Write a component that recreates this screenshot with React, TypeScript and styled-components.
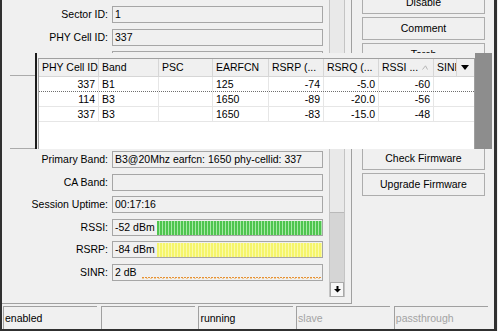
import styled, { createGlobalStyle } from "styled-components";

const GlobalStyle = createGlobalStyle`
  html, body {
    margin: 0;
    padding: 0;
    background: #f0f0f0;
    overflow: hidden;
  }
  body {
    font-family: "Liberation Sans", Arial, sans-serif;
    font-size: 10.5px;
    line-height: 13px;
    color: #000;
  }
`;

/* window frame, left / right / bottom edges are visible */
const Window = styled.div`
  position: relative;
  box-sizing: border-box;
  width: 497px;
  height: 331px;
  border-left: 2px solid #303030;
  border-right: 3px solid #303030;
  border-bottom: 2px solid #303030;
  display: flex;
  flex-direction: column;
  overflow: hidden;
`;

const Main = styled.div`
  display: flex;
  height: 304px;
  flex: none;
`;

const FormPanel = styled.div`
  box-sizing: border-box;
  width: 350px;
  height: 304px;
  border-right: 1px solid #a0a0a0;
  border-bottom: 1px solid #a0a0a0;
  padding-right: 6px;
  display: flex;
  overflow: hidden;
`;

const FormBody = styled.div`
  flex: 1;
  padding: 6px 6px 0 0;
  display: flex;
  flex-direction: column;
`;

const Row = styled.div`
  display: grid;
  grid-template-columns: 106px 211px;
  column-gap: 4px;
  height: 17px;
  flex: none;
  & + & {
    margin-top: 5.5px;
  }
`;

const Label = styled.div`
  text-align: right;
  align-self: center;
  white-space: nowrap;
`;

const Field = styled.div`
  box-sizing: border-box;
  height: 17px;
  border: 1px solid #a6a6a6;
  padding-left: 2px;
  display: flex;
  align-items: center;
  white-space: nowrap;
  overflow: hidden;
`;

const Separator = styled.div`
  flex: none;
  height: 0;
  border-top: 1px solid #ababab;
  margin: 7px 1px 2.5px 8px;
`;

const ValueText = styled.span<{ $w: number }>`
  flex: none;
  width: ${(p) => p.$w}px;
`;

const meterFill = {
  green: "repeating-linear-gradient(90deg, #4fc54f 0 2px, #a6e9a6 2px 3px)",
  yellow: "repeating-linear-gradient(90deg, #f5f56b 0 2px, #fafaa8 2px 3px)",
};

const Meter = styled.div<{ $kind: "green" | "yellow" }>`
  flex: 1;
  align-self: stretch;
  margin-top: 1px;
  background: ${(p) => meterFill[p.$kind]};
`;

/* SINR is drawn as a thin dashed trace near the bottom of the box */
const Trace = styled.div`
  flex: 1;
  align-self: stretch;
  display: flex;
  flex-direction: column;
  justify-content: flex-end;
  padding-bottom: 1px;
`;

const TraceLine = styled.div`
  flex: none;
  height: 2px;
  background:
    repeating-linear-gradient(90deg, #e59237 0 2px, transparent 2px 3px) top / 100% 1px no-repeat,
    repeating-linear-gradient(90deg, #f2c890 0 2px, transparent 2px 4px) bottom / 100% 1px no-repeat;
`;

const Scrollbar = styled.div`
  box-sizing: border-box;
  width: 16px;
  height: 297px;
  flex: none;
  display: flex;
  flex-direction: column;
  border-left: 1px solid #c4c4c4;
  border-right: 1px solid #c4c4c4;
`;

const Track = styled.div`
  flex: 1;
  background: #e9e9e9;
`;

const Thumb = styled.div`
  box-sizing: border-box;
  height: 70px;
  background: #d5d5d5;
  border-top: 1px solid #b9b9b9;
`;

const ArrowButton = styled.div`
  box-sizing: border-box;
  height: 15px;
  background: #f7f7f7;
  border: 1px solid #a9a9a9;
  display: flex;
  align-items: center;
  justify-content: center;
`;

const ButtonColumn = styled.div`
  margin: -9px 0 0 10px;
  width: 123px;
  display: flex;
  flex-direction: column;
  gap: 3px;
`;

const Button = styled.div`
  box-sizing: border-box;
  height: 23px;
  border: 1px solid #adadad;
  background: #f0f0f0;
  display: flex;
  align-items: center;
  justify-content: center;
  white-space: nowrap;
`;

const StatusBar = styled.div`
  margin-top: 2px;
  height: 23px;
  display: flex;
  gap: 3.5px;
  padding: 0 6px 0 1px;
`;

const StatusCell = styled.div<{ $off?: boolean }>`
  flex: 1;
  border-top: 1px solid #a0a0a0;
  border-left: 1px solid #a0a0a0;
  padding-left: 1px;
  display: flex;
  align-items: center;
  color: ${(p) => (p.$off ? "#a3a3a3" : "#000")};
`;

/* floating cell list laid over the form */
const Popup = styled.div`
  position: absolute;
  left: 33px;
  top: 53px;
  width: 457px;
  height: 96px;
  box-sizing: border-box;
  border-left: 2px solid #1c1c1c;
  background: #f0f0f0;
  display: flex;
`;

const ListArea = styled.div`
  padding: 5px 0 0 1px;
  display: flex;
`;

const Table = styled.div`
  box-sizing: border-box;
  width: 437px;
  border-left: 1px solid #a0a0a0;
  border-top: 1px solid #a0a0a0;
  border-right: 1px solid #a0a0a0;
  background: #fff;
`;

const cols = "60px 60px 54px 56px 55px 55px 55px 23px 15px";

const Header = styled.div`
  display: grid;
  grid-template-columns: ${cols};
  height: 18px;
  background: #f0f0f0;
  border-bottom: 1px solid #d6d6d6;
  box-sizing: border-box;
`;

const HeadCell = styled.div`
  box-sizing: border-box;
  border-right: 1px solid #d6d6d6;
  padding: 0 3px;
  display: flex;
  align-items: center;
  white-space: nowrap;
  overflow: hidden;
`;

const DropCell = styled.div`
  display: flex;
  align-items: center;
  justify-content: center;
`;

const DataRow = styled.div<{ $focus?: boolean }>`
  display: grid;
  grid-template-columns: 60px 60px 54px 56px 55px 55px 55px 38px;
  height: 15px;
  box-sizing: border-box;
  border-bottom: 1px ${(p) => (p.$focus ? "dotted #6f6f6f" : "solid #e6e6e6")};
`;

const Cell = styled.div<{ $right?: boolean }>`
  box-sizing: border-box;
  border-right: 1px solid #e6e6e6;
  padding: 0 3px;
  display: flex;
  align-items: center;
  justify-content: ${(p) => (p.$right ? "flex-end" : "flex-start")};
  white-space: nowrap;
  overflow: hidden;
  &:last-child {
    border-right: none;
  }
`;

const Shade = styled.div`
  flex: 1;
  background: #8d8d8d;
`;

const SortMark = () => (
  <svg width="6" height="5" viewBox="0 0 6 5" style={{ marginLeft: 4, flex: "none" }}>
    <polyline points="0.5,4.5 3.5,0.8 5.5,4.5" fill="none" stroke="#b5b5b5" strokeWidth="1" />
  </svg>
);

const DownTriangle = () => (
  <svg width="8" height="5" viewBox="0 0 8 5">
    <polygon points="0,0 8,0 4,5" fill="#000" />
  </svg>
);

const ScrollDown = () => (
  <svg width="7" height="7" viewBox="0 0 7 7">
    <rect x="2.5" y="0" width="2" height="3" fill="#000" />
    <polygon points="0,3 7,3 3.5,6.5" fill="#000" />
  </svg>
);

const cells = [
  { id: "337", band: "B1", earfcn: "125", rsrp: "-74", rsrq: "-5.0", rssi: "-60" },
  { id: "114", band: "B3", earfcn: "1650", rsrp: "-89", rsrq: "-20.0", rssi: "-56" },
  { id: "337", band: "B3", earfcn: "1650", rsrp: "-83", rsrq: "-15.0", rssi: "-48" },
];

const App = () => {
  return (
    <>
      <GlobalStyle />
      <Window>
        <Main>
          <FormPanel>
            <FormBody>
              <Row>
                <Label>Sector ID:</Label>
                <Field>1</Field>
              </Row>
              <Row>
                <Label>PHY Cell ID:</Label>
                <Field>337</Field>
              </Row>
              {/* rows below are covered by the cell list */}
              <Row>
                <Label />
                <Field />
              </Row>
              <Separator />
              <Row>
                <Label />
                <Field />
              </Row>
              <Row>
                <Label />
                <Field />
              </Row>
              <Row>
                <Label />
                <Field />
              </Row>
              <Separator />
              <Row>
                <Label>Primary Band:</Label>
                <Field>B3@20Mhz earfcn: 1650 phy-cellid: 337</Field>
              </Row>
              <Row>
                <Label>CA Band:</Label>
                <Field></Field>
              </Row>
              <Row>
                <Label>Session Uptime:</Label>
                <Field>00:17:16</Field>
              </Row>
              <Row>
                <Label>RSSI:</Label>
                <Field>
                  <ValueText $w={42}>-52 dBm</ValueText>
                  <Meter $kind="green" />
                </Field>
              </Row>
              <Row>
                <Label>RSRP:</Label>
                <Field>
                  <ValueText $w={42}>-84 dBm</ValueText>
                  <Meter $kind="yellow" />
                </Field>
              </Row>
              <Row>
                <Label>SINR:</Label>
                <Field>
                  <ValueText $w={27}>2 dB</ValueText>
                  <Trace>
                    <TraceLine />
                  </Trace>
                </Field>
              </Row>
            </FormBody>
            <Scrollbar>
              <Track />
              <Thumb />
              <ArrowButton>
                <ScrollDown />
              </ArrowButton>
            </Scrollbar>
          </FormPanel>
          <ButtonColumn>
            <Button>Disable</Button>
            <Button>Comment</Button>
            <Button>Torch</Button>
            <Button />
            <Button />
            <Button />
            <Button>Check Firmware</Button>
            <Button>Upgrade Firmware</Button>
          </ButtonColumn>
        </Main>
        <StatusBar>
          <StatusCell>enabled</StatusCell>
          <StatusCell></StatusCell>
          <StatusCell>running</StatusCell>
          <StatusCell $off>slave</StatusCell>
          <StatusCell $off>passthrough</StatusCell>
        </StatusBar>

        <Popup>
          <ListArea>
            <Table>
              <Header>
                <HeadCell>PHY Cell ID</HeadCell>
                <HeadCell>Band</HeadCell>
                <HeadCell>PSC</HeadCell>
                <HeadCell>EARFCN</HeadCell>
                <HeadCell>RSRP (...</HeadCell>
                <HeadCell>RSRQ (...</HeadCell>
                <HeadCell>
                  RSSI ...
                  <SortMark />
                </HeadCell>
                <HeadCell>SINR</HeadCell>
                <DropCell>
                  <DownTriangle />
                </DropCell>
              </Header>
              {cells.map((c, idx) => (
                <DataRow key={idx} $focus={idx === 0}>
                  <Cell $right>{c.id}</Cell>
                  <Cell>{c.band}</Cell>
                  <Cell></Cell>
                  <Cell>{c.earfcn}</Cell>
                  <Cell $right>{c.rsrp}</Cell>
                  <Cell $right>{c.rsrq}</Cell>
                  <Cell $right>{c.rssi}</Cell>
                  <Cell></Cell>
                </DataRow>
              ))}
            </Table>
          </ListArea>
          <Shade />
        </Popup>
      </Window>
    </>
  );
};

export default App;
